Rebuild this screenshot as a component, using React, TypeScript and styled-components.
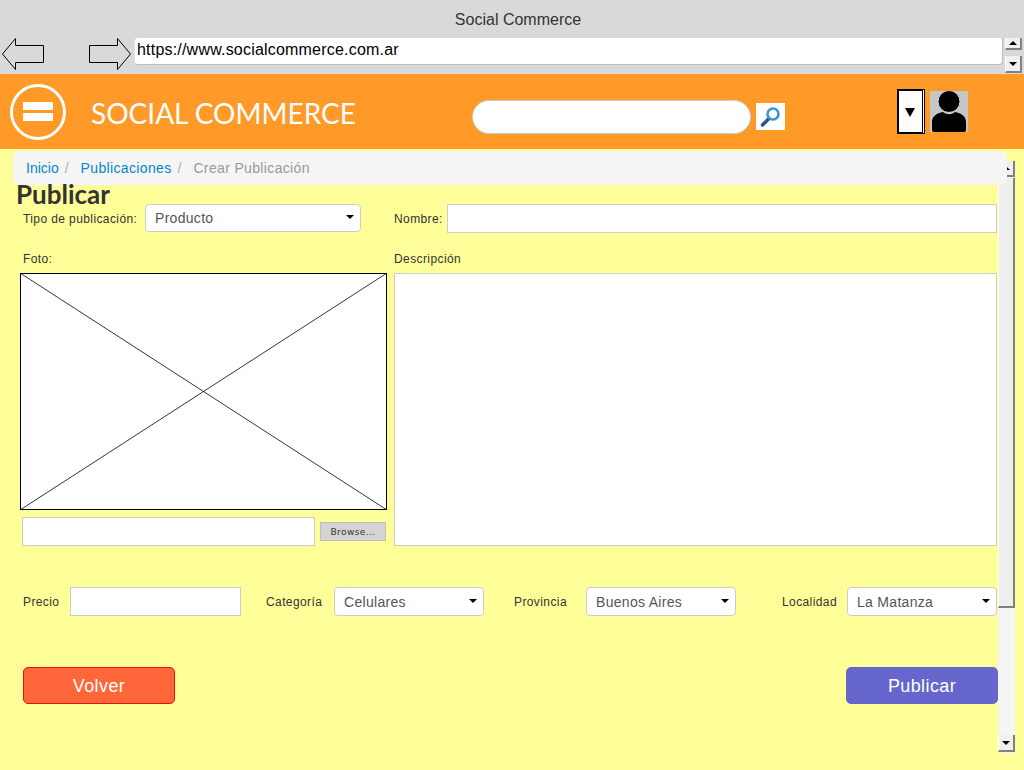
import styled, { createGlobalStyle } from 'styled-components';

const GlobalStyle = createGlobalStyle`
  html, body {
    margin: 0;
    padding: 0;
    height: 770px;
    overflow: hidden;
    background: #ffff99;
    font-family: "Liberation Sans", Arial, sans-serif;
  }
  * { box-sizing: border-box; }
`;

const Page = styled.div`
  display: flex;
  flex-direction: column;
  width: 1024px;
  height: 770px;
`;

/* browser chrome */
const BrowserBar = styled.div`
  position: relative;
  flex: 0 0 74px;
  background: #d9d9d9;
  padding: 11px 0 0;
`;

const WindowTitle = styled.div`
  height: 18px;
  line-height: 18px;
  padding-left: 12px;
  text-align: center;
  font-size: 16px;
  color: #333;
`;

const UrlRow = styled.div`
  display: flex;
  align-items: flex-start;
  margin-top: 9px;
  padding-left: 2px;
`;

const NavArrow = styled.svg<{ $right?: number }>`
  flex: none;
  width: 42px;
  height: 32px;
  margin-right: ${({ $right }) => $right ?? 0}px;
`;

const UrlField = styled.div`
  width: 869px;
  height: 27px;
  margin-left: 3px;
  padding: 2px 0 0 2px;
  background: #fff;
  border-bottom: 1px solid #bdbdbd;
  border-left: 1px solid #e2e2e2;
  border-right: 1px solid #bdbdbd;
  border-radius: 4px 0 4px 4px;
  font-size: 16px;
  letter-spacing: 0.2px;
  line-height: 20px;
  color: #000;
`;

const ScrollBtn = styled.div<{ $left: number; $top: number; $height?: number }>`
  position: absolute;
  display: flex;
  align-items: center;
  justify-content: center;
  left: ${({ $left }) => $left}px;
  top: ${({ $top }) => $top}px;
  width: 17px;
  height: ${({ $height }) => $height ?? 17}px;
  background: #f0f0f0;
  border-right: 2px solid #808080;
  border-bottom: 2px solid #808080;
  border-left: 1px solid #fff;
`;

const Tri = styled.span<{ $up?: boolean }>`
  width: 0;
  height: 0;
  border-left: 4px solid transparent;
  border-right: 4px solid transparent;
  ${({ $up }) => ($up ? 'border-bottom: 4px solid #000;' : 'border-top: 4px solid #000;')}
`;

/* site header */
const Header = styled.header`
  display: flex;
  align-items: center;
  flex: 0 0 75px;
  background: #ff9a28;
  padding-left: 10px;
`;

const MenuButton = styled.div`
  display: flex;
  flex-direction: column;
  align-items: center;
  justify-content: center;
  gap: 3px;
  flex: none;
  width: 56px;
  height: 56px;
  border: 3px solid #fff;
  border-radius: 50%;
`;

const MenuBar = styled.span`
  width: 30px;
  height: 8px;
  background: #fff;
`;

const Brand = styled.div`
  flex: none;
  width: 381px;
  margin: 2px 0 0 25px;
  font-family: "Comic Sans MS", "Lato", "Noto Sans", sans-serif;
  font-size: 28px;
  color: #fff;
  white-space: nowrap;
`;

const SearchInput = styled.input`
  flex: none;
  width: 279px;
  height: 34px;
  margin-top: 10px;
  border: 1px solid #ccc;
  border-radius: 17px;
  background: #fff;
  outline: none;
`;

const SearchButton = styled.div`
  display: flex;
  align-items: center;
  justify-content: center;
  flex: none;
  width: 29px;
  height: 27px;
  margin: 10px 0 0 5px;
  background: #fff;
`;

const UserArea = styled.div`
  display: flex;
  align-items: flex-start;
  flex: none;
  margin-left: 112px;
`;

const UserMenu = styled.div`
  display: flex;
  align-items: center;
  justify-content: center;
  width: 28px;
  height: 45px;
  padding-right: 1px;
  background: #fff;
  border: 2px solid #000;
  border-right: 3px double #000;
  color: #000;
`;

const Avatar = styled.svg`
  display: block;
  width: 38px;
  height: 41px;
  margin: 2px 0 0 5px;
  background: #c6c6c6;
`;

/* page body */
const Main = styled.main`
  position: relative;
  flex: 1;
  padding-top: 2px;
  background: #ffff99;
`;

const PageScroll = styled.div`
  position: absolute;
  left: 998px;
  top: 12px;
  width: 17px;
  height: 592px;
  background: #f5f5f5;
`;

const PageThumb = styled.div`
  position: absolute;
  left: 0;
  top: 17px;
  width: 17px;
  height: 430px;
  background: #eee;
  border-left: 1px solid #fff;
  border-right: 2px solid #808080;
  border-bottom: 2px solid #808080;
`;

const Breadcrumb = styled.nav`
  position: relative;
  display: flex;
  align-items: center;
  width: 994px;
  height: 34px;
  margin-left: 13px;
  padding-left: 13px;
  background: #f5f5f5;
  border-radius: 5px;
  font-size: 14px;
`;

const Crumb = styled.span<{ $active?: boolean; $spaced?: boolean }>`
  color: ${({ $active }) => ($active ? '#999' : '#0088cc')};
  letter-spacing: ${({ $spaced }) => ($spaced ? '0.35px' : '0')};
`;

const Sep = styled.span`
  padding: 0 12px 0 6px;
  color: #aaa;
`;

const Title = styled.h1`
  position: relative;
  height: 19px;
  margin: 0 0 0 16px;
  font-family: "Comic Sans MS", "Lato", "Noto Sans", sans-serif;
  font-size: 26px;
  font-weight: 700;
  line-height: 18px;
  color: #333;
`;

const TopRow = styled.div`
  display: flex;
  align-items: flex-start;
  height: 28px;
  padding-left: 23px;
`;

const Label = styled.label`
  flex: none;
  font-size: 12px;
  letter-spacing: 0.4px;
  color: #333;
  white-space: nowrap;
`;

const InlineLabel = styled(Label)<{ $width: number; $offset?: number }>`
  width: ${({ $width }) => $width}px;
  margin-left: ${({ $offset }) => $offset ?? 0}px;
  line-height: 30px;
`;

const Select = styled.div<{ $width: number; $height?: number }>`
  position: relative;
  flex: none;
  display: flex;
  align-items: center;
  width: ${({ $width }) => $width}px;
  height: ${({ $height }) => $height ?? 28}px;
  padding-left: 9px;
  background: #fff;
  border: 1px solid #ccc;
  border-radius: 4px;
  font-size: 14px;
  letter-spacing: 0.3px;
  color: #555;
`;

const Caret = styled.span`
  position: absolute;
  right: 6px;
  top: 50%;
  margin-top: -3px;
  border-left: 4px solid transparent;
  border-right: 4px solid transparent;
  border-top: 4px solid #000;
`;

const TextInput = styled.input<{ $width: number }>`
  flex: none;
  display: block;
  width: ${({ $width }) => $width}px;
  height: 29px;
  background: #fff;
  border: 1px solid #ccc;
  border-radius: 0;
  outline: none;
`;

const Columns = styled.div`
  display: grid;
  grid-template-columns: 367px 603px;
  column-gap: 7px;
  margin-top: 18px;
  padding-left: 20px;
`;

const Column = styled.div`
  display: flex;
  flex-direction: column;
`;

const ColumnLabel = styled(Label)<{ $offset?: number }>`
  height: 16px;
  margin: 0 0 7px ${({ $offset }) => $offset ?? 0}px;
  line-height: 18px;
`;

const PhotoBox = styled.svg`
  display: block;
  width: 367px;
  height: 237px;
  background: #fff;
`;

const FileRow = styled.div`
  display: flex;
  align-items: center;
  margin: 7px 0 0 2px;
`;

const BrowseButton = styled.button`
  flex: none;
  width: 66px;
  height: 19px;
  margin-left: 5px;
  padding: 0;
  background: #d4d4d4;
  border: 1px solid #c0c0c0;
  font-family: "DejaVu Sans", sans-serif;
  font-size: 9px;
  letter-spacing: 0.4px;
  color: #333;
`;

const TextArea = styled.textarea`
  display: block;
  width: 603px;
  height: 273px;
  background: #fff;
  border: 1px solid #ccc;
  resize: none;
  outline: none;
`;

const FilterRow = styled.div`
  display: flex;
  height: 29px;
  margin-top: 41px;
  padding-left: 23px;
`;

const ActionRow = styled.div`
  display: flex;
  justify-content: space-between;
  width: 975px;
  margin: 51px 0 0 23px;
`;

const ActionButton = styled.button<{ $bg: string; $edge: string }>`
  width: 152px;
  height: 37px;
  padding: 1px 0 0;
  background: ${({ $bg }) => $bg};
  border: 1px solid ${({ $edge }) => $edge};
  border-radius: 5px;
  font-family: "Liberation Sans", Arial, sans-serif;
  font-size: 18px;
  letter-spacing: 0.4px;
  color: #fff;
`;

const App = () => {
  return (
    <>
      <GlobalStyle />
      <Page>
        <BrowserBar>
          <WindowTitle>Social Commerce</WindowTitle>
          <UrlRow>
            <NavArrow viewBox="0 0 42 32" $right={45}>
              <polygon points="0.5,16 13.5,0.5 13.5,7.5 41.5,7.5 41.5,24.5 13.5,24.5 13.5,31.5" fill="none" stroke="#000" />
            </NavArrow>
            <NavArrow viewBox="0 0 42 32">
              <polygon points="41.5,16 28.5,0.5 28.5,7.5 0.5,7.5 0.5,24.5 28.5,24.5 28.5,31.5" fill="none" stroke="#000" />
            </NavArrow>
            <UrlField>https://www.socialcommerce.com.ar</UrlField>
          </UrlRow>
          <ScrollBtn $left={1005} $top={38} $height={12}><Tri $up /></ScrollBtn>
          <ScrollBtn $left={1005} $top={56}><Tri /></ScrollBtn>
        </BrowserBar>

        <Header>
          <MenuButton>
            <MenuBar />
            <MenuBar />
          </MenuButton>
          <Brand>SOCIAL COMMERCE</Brand>
          <SearchInput />
          <SearchButton>
            <svg width="25" height="24" viewBox="0 0 25 24">
              <line x1="4.5" y1="20" x2="10.5" y2="14" stroke="#2a4f9c" strokeWidth="3.5" strokeLinecap="round" />
              <circle cx="15" cy="9" r="5.5" fill="#fbfdff" stroke="#3f93d2" strokeWidth="2.6" />
            </svg>
          </SearchButton>
          <UserArea>
            <UserMenu>
              <svg width="10" height="10" viewBox="0 0 10 10">
                <polygon points="0,1 10,1 5,10" fill="#000" />
              </svg>
            </UserMenu>
            <Avatar viewBox="0 0 38 41">
              <path d="M2 39 V31 C2 25 7 22 13 21 C17 24 21 24 25 21 C31 22 36 25 36 31 V39 Q36 41 34 41 H4 Q2 41 2 39 Z" fill="#000" />
              <circle cx="19" cy="10.5" r="11" fill="#000" stroke="#d4dbe4" strokeWidth="1" />
            </Avatar>
          </UserArea>
        </Header>

        <Main>
          <PageScroll>
            <ScrollBtn $left={0} $top={0} $height={16}><Tri $up /></ScrollBtn>
            <PageThumb />
            <ScrollBtn $left={0} $top={574}><Tri /></ScrollBtn>
          </PageScroll>
          <Breadcrumb>
            <Crumb>Inicio</Crumb>
            <Sep>/</Sep>
            <Crumb $spaced>Publicaciones</Crumb>
            <Sep>/</Sep>
            <Crumb $active $spaced>Crear Publicación</Crumb>
          </Breadcrumb>
          <Title>Publicar</Title>
          <TopRow>
            <InlineLabel $width={122}>Tipo de publicación:</InlineLabel>
            <Select $width={216}>Producto<Caret /></Select>
            <InlineLabel $width={53} $offset={33}>Nombre:</InlineLabel>
            <TextInput $width={550} />
          </TopRow>
          <Columns>
            <Column>
              <ColumnLabel $offset={3}>Foto:</ColumnLabel>
              <PhotoBox viewBox="0 0 367 237">
                <rect x="0.5" y="0.5" width="366" height="236" fill="#fff" stroke="#000" />
                <line x1="0" y1="0" x2="367" y2="237" stroke="#000" strokeWidth="0.8" />
                <line x1="367" y1="0" x2="0" y2="237" stroke="#000" strokeWidth="0.8" />
              </PhotoBox>
              <FileRow>
                <TextInput $width={293} />
                <BrowseButton>Browse...</BrowseButton>
              </FileRow>
            </Column>
            <Column>
              <ColumnLabel>Descripción</ColumnLabel>
              <TextArea />
            </Column>
          </Columns>
          <FilterRow>
            <InlineLabel $width={47}>Precio</InlineLabel>
            <TextInput $width={171} />
            <InlineLabel $width={68} $offset={25}>Categoría</InlineLabel>
            <Select $width={150} $height={29}>Celulares<Caret /></Select>
            <InlineLabel $width={72} $offset={30}>Provincia</InlineLabel>
            <Select $width={150} $height={29}>Buenos Aires<Caret /></Select>
            <InlineLabel $width={65} $offset={46}>Localidad</InlineLabel>
            <Select $width={150} $height={29}>La Matanza<Caret /></Select>
          </FilterRow>
          <ActionRow>
            <ActionButton $bg="#ff6639" $edge="#e8120c">Volver</ActionButton>
            <ActionButton $bg="#6666cc" $edge="#6666cc">Publicar</ActionButton>
          </ActionRow>
        </Main>
      </Page>
    </>
  );
};

export default App;
